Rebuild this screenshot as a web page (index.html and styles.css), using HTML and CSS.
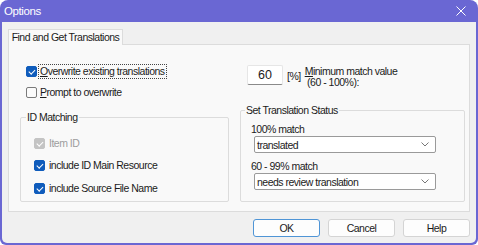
FILE: index.html
```html
<!DOCTYPE html>
<html lang="en">
<head>
    <meta charset="UTF-8">
    <title>Options</title>
    <link rel="stylesheet" href="styles.css">
</head>
<body>

<div class="window">
    <div class="titlebar">
        <span class="title">Options</span>
        <svg class="close" width="10" height="10" viewBox="0 0 10 10">
            <path d="M0.5 0.5 L9.5 9.5 M9.5 0.5 L0.5 9.5" stroke="#fff" stroke-width="1" fill="none"/>
        </svg>
    </div>

    <div class="client">
        <div class="tabs">
            <div class="tab">Find and Get Translations</div>
        </div>

        <div class="panel">
            <!-- left column -->
            <div class="col col-left">
                <div class="check first">
                    <span class="box on"></span>
                    <span class="text focus"><u>O</u>verwrite existing translations</span>
                </div>
                <div class="check second">
                    <span class="box"></span>
                    <span class="text"><u>P</u>rompt to overwrite</span>
                </div>

                <fieldset class="group id-group">
                    <legend>ID Matching</legend>
                    <div class="group-body">
                        <div class="check disabled">
                            <span class="box on"></span>
                            <span class="text">Item ID</span>
                        </div>
                        <div class="check">
                            <span class="box on"></span>
                            <span class="text">include ID Main Resource</span>
                        </div>
                        <div class="check">
                            <span class="box on"></span>
                            <span class="text">include Source File Name</span>
                        </div>
                    </div>
                </fieldset>
            </div>

            <!-- right column -->
            <div class="col col-right">
                <div class="match-row">
                    <div class="num">60</div>
                    <span class="pct">[%]</span>
                    <div class="match-label"><u>M</u>inimum match value<br>&nbsp;(60 - 100%):</div>
                </div>

                <fieldset class="group status-group">
                    <legend>Set Translation Status</legend>
                    <div class="group-body">
                        <div class="field-label">100% match</div>
                        <div class="select">
                            <span>translated</span>
                            <svg width="8" height="5" viewBox="0 0 8 5"><path d="M0.5 0.5 L4 4 L7.5 0.5" stroke="#777" fill="none"/></svg>
                        </div>
                        <div class="field-label second-label">60 - 99% match</div>
                        <div class="select">
                            <span>needs review translation</span>
                            <svg width="8" height="5" viewBox="0 0 8 5"><path d="M0.5 0.5 L4 4 L7.5 0.5" stroke="#777" fill="none"/></svg>
                        </div>
                    </div>
                </fieldset>
            </div>
        </div>

        <div class="buttons">
            <div class="btn default">OK</div>
            <div class="btn">Cancel</div>
            <div class="btn">Help</div>
        </div>
    </div>
</div>

</body>
</html>
```

FILE: styles.css
```css
html, body {
    margin: 0;
    padding: 0;
    background: #ffffff;
}
body {
    font-family: "Liberation Sans", Arial, sans-serif;
    font-size: 10.5px;
    letter-spacing: -0.5px;
    color: #1b1b1b;
}
.window {
    width: 478px;
    height: 245px;
    box-sizing: border-box;
    background: #6a67d3;
    border-radius: 8px 8px 6px 6px;
    padding: 0 2px 2px 2px;
    display: flex;
    flex-direction: column;
}
.titlebar {
    height: 22px;
    display: flex;
    align-items: center;
    justify-content: space-between;
    padding: 0 10px 0 2px;
    flex-shrink: 0;
}
.title {
    color: #fff;
    font-size: 11.5px;
    letter-spacing: -0.4px;
}
.client {
    flex: 1;
    background: #f0f0f0;
    border-radius: 0 0 5px 5px;
    padding: 7px 6px 0 6px;
}
.tabs {
    display: flex;
    height: 15px;
    position: relative;
    z-index: 1;
}
.tab {
    width: 115px;
    box-sizing: border-box;
    height: 16px;
    background: #f9f9f9;
    border: 1px solid #dcdcdc;
    border-bottom: none;
    text-align: center;
    line-height: 15px;
}
.panel {
    height: 168px;
    box-sizing: border-box;
    background: #f9f9f9;
    border: 1px solid #dcdcdc;
    padding: 19px 4px 0 11px;
    display: flex;
    gap: 11px;
}
.col {
    display: flex;
    flex-direction: column;
}
.col-left {
    width: 209px;
}
.col-right {
    width: 225px;
}

/* checkboxes */
.check {
    display: flex;
    align-items: center;
    height: 14px;
}
.check.first,
.check.second {
    margin-left: 6px;
}
.check.second {
    margin-top: 7px;
}
.box {
    width: 11px;
    height: 11px;
    box-sizing: border-box;
    border: 1px solid #7a7a7a;
    border-radius: 2px;
    background: #fbfbfb;
    position: relative;
    flex-shrink: 0;
    margin-right: 2px;
}
.box.on {
    background: #0f5cbc;
    border-color: #0f5cbc;
}
.box.on::after {
    content: '';
    position: absolute;
    left: 3px;
    top: 1px;
    width: 2.5px;
    height: 5px;
    border: solid #fff;
    border-width: 0 1.2px 1.2px 0;
    transform: rotate(45deg);
}
.text {
    line-height: 13px;
    padding: 0 1px;
}
.focus {
    outline: 1px dotted #444;
    outline-offset: 0;
}
.disabled .box.on {
    background: #c4c4c4;
    border-color: #c4c4c4;
}
.disabled .text {
    color: #9d9d9d;
}

/* group boxes */
.group {
    margin: 0;
    padding: 0;
    border: 1px solid #dcdcdc;
    border-radius: 2px;
    min-width: 0;
}
.group legend {
    padding: 0 1px;
    margin-left: 5px;
    line-height: 14px;
}
.id-group {
    margin-top: 11px;
    height: 92px;
    box-sizing: border-box;
}
.id-group .group-body {
    padding: 12px 0 0 13px;
    display: flex;
    flex-direction: column;
    gap: 8.5px;
}
.id-group .box {
    margin-right: 3px;
}

/* right side */
.match-row {
    display: flex;
    align-items: flex-start;
    margin-left: 7px;
    padding-top: 1px;
}
.num {
    width: 36px;
    height: 20px;
    box-sizing: border-box;
    background: #fff;
    border: 1px solid #e6e6e6;
    border-bottom-color: #8a8a8a;
    border-radius: 2px;
    text-align: center;
    font-size: 12.5px;
    letter-spacing: 0;
    line-height: 19px;
}
.pct {
    margin-left: 4px;
    margin-top: 5px;
}
.match-label {
    margin-left: 4px;
    line-height: 11px;
    margin-top: 1px;
}
.status-group {
    margin-top: 15px;
    height: 99px;
    box-sizing: border-box;
}
.status-group legend {
    margin-left: 4px;
}
.status-group .group-body {
    padding: 5px 0 0 10px;
}
.field-label {
    line-height: 14px;
}
.second-label {
    margin-top: 6px;
}
.select {
    margin-left: 3px;
    width: 182px;
    height: 17px;
    box-sizing: border-box;
    background: #fff;
    border: 1px solid #9a9a9a;
    border-radius: 2px;
    display: flex;
    align-items: center;
    justify-content: space-between;
    padding: 0 6px 0 2px;
}

/* buttons */
.buttons {
    display: flex;
    justify-content: flex-end;
    gap: 8px;
    margin-top: 7px;
}
.btn {
    width: 67px;
    height: 18px;
    box-sizing: border-box;
    background: #fdfdfd;
    border: 1px solid #d4d4d4;
    border-radius: 3px;
    text-align: center;
    line-height: 16px;
}
.btn.default {
    border-color: #4f95d6;
}
```
